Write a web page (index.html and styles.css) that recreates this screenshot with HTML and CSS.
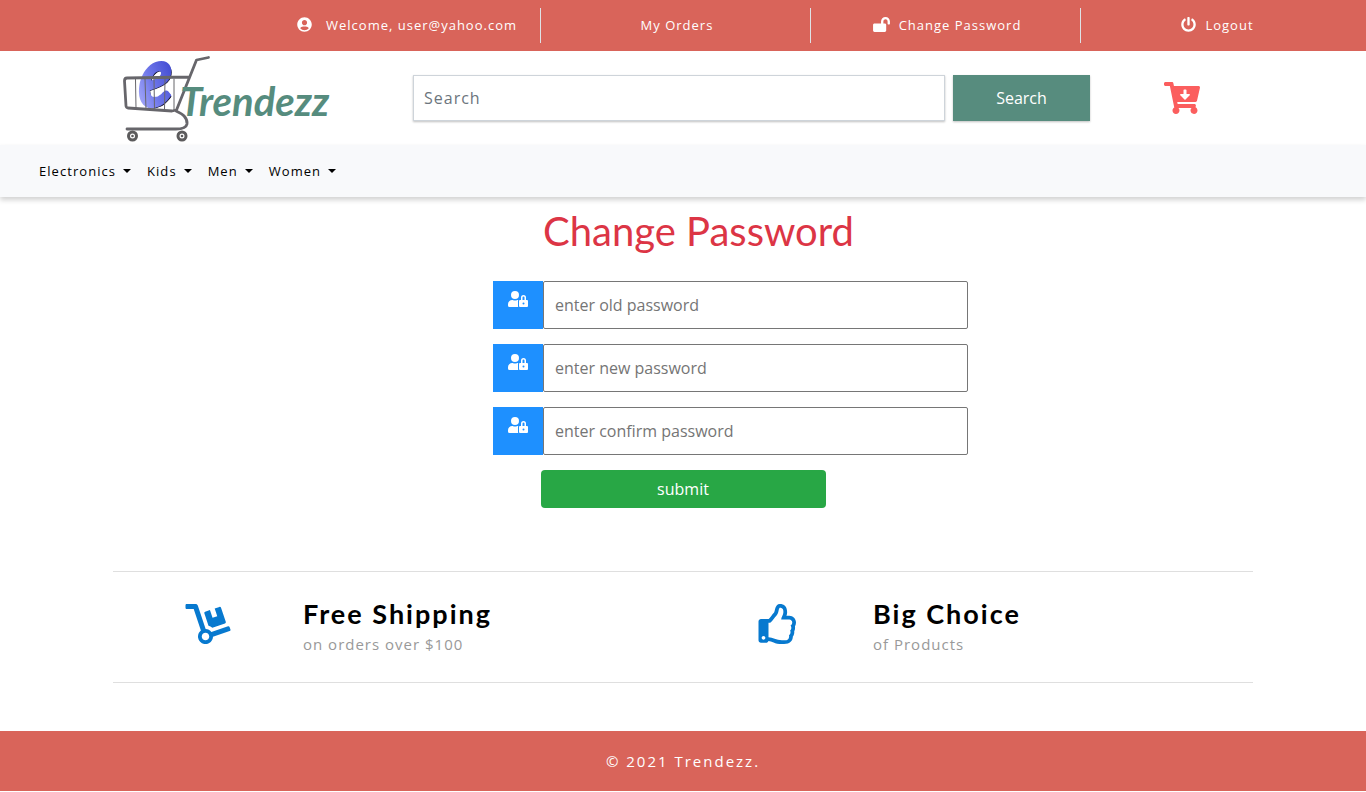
FILE: index.html
```html
<!DOCTYPE html>
<html lang="en">
<head>
<meta charset="utf-8">
<title>Trendezz</title>
<link rel="stylesheet" href="styles.css">
</head>
<body>
<svg class="defs" width="0" height="0">
  <symbol id="user-lock" viewBox="0 0 640 512"><path d="M224 256A128 128 0 1 0 96 128a128 128 0 0 0 128 128zm96 64a63.08 63.08 0 0 1 8.1-30.5c-4.8-.5-9.5-1.5-14.5-1.5h-16.7a174.08 174.08 0 0 1-145.8 0h-16.7A134.43 134.43 0 0 0 0 422.4V464a48 48 0 0 0 48 48h280.9a63.54 63.54 0 0 1-8.9-32zm288-32h-32v-80a80 80 0 0 0-160 0v80h-32a32 32 0 0 0-32 32v160a32 32 0 0 0 32 32h224a32 32 0 0 0 32-32V320a32 32 0 0 0-32-32zM496 432a32 32 0 1 1 32-32 32 32 0 0 1-32 32zm32-144h-64v-80a32 32 0 0 1 64 0z"/></symbol>
</svg>
<div class="topbar">
  <div class="top-item">
    <svg class="ico user" viewBox="0 0 496 512"><path d="M248 8C111 8 0 119 0 256s111 248 248 248 248-111 248-248S385 8 248 8zm0 96c48.6 0 88 39.4 88 88s-39.4 88-88 88-88-39.4-88-88 39.4-88 88-88zm0 344c-58.7 0-111.3-26.6-146.5-68.2 18.8-35.4 55.6-59.8 98.5-59.8 2.4 0 4.8.4 7.1 1.1 13 4.2 26.6 6.9 40.9 6.9 14.3 0 28-2.7 40.9-6.9 2.3-.7 4.7-1.1 7.1-1.1 42.9 0 79.7 24.4 98.5 59.8C359.3 421.4 306.7 448 248 448z"/></svg>
    <span>Welcome, user@yahoo.com</span>
  </div>
  <div class="top-item"><span>My Orders</span></div>
  <div class="top-item">
    <svg class="ico lock" viewBox="0 0 576 512"><path d="M423.5 0C339.5.3 272 69.5 272 153.5V224H48c-26.5 0-48 21.5-48 48v192c0 26.5 21.5 48 48 48h352c26.5 0 48-21.5 48-48V272c0-26.5-21.5-48-48-48h-48v-71.1c0-39.6 31.7-72.5 71.3-72.9 40-.4 72.7 32.1 72.7 72v80c0 13.3 10.7 24 24 24h32c13.3 0 24-10.7 24-24v-80C576 68 507.5-.3 423.5 0z"/></svg>
    <span>Change Password</span>
  </div>
  <div class="top-item">
    <svg class="ico power" viewBox="0 0 512 512"><path d="M400 54.1c63 45 104 118.6 104 201.9 0 136.8-110.8 247.7-247.5 248C120 504.3 8.2 393 8 256.4 7.9 173.1 48.9 99.3 111.8 54.2c11.7-8.3 28-4.8 35 7.7L162.6 90c5.9 10.5 3.1 23.8-6.6 31-41.5 30.8-68 79.6-68 134.9-.1 92.3 74.5 168.1 168 168.1 91.6 0 168.6-74.2 168-169.1-.3-51.8-24.7-101.8-68.1-134-9.7-7.2-12.4-20.5-6.5-30.9l15.8-28.1c7-12.4 23.2-16.1 34.8-7.8zM296 264V24c0-13.3-10.7-24-24-24h-32c-13.3 0-24 10.7-24 24v240c0 13.3 10.7 24 24 24h32c13.3 0 24-10.7 24-24z"/></svg>
    <span>Logout</span>
  </div>
</div>

<header class="header">
  <a class="logo">
    <svg class="logo-cart" width="90" height="90" viewBox="0 0 90 90">
      <defs>
        <linearGradient id="blue" x1="0" y1="1" x2="1" y2="0">
          <stop offset="0" stop-color="#b9bcff"/><stop offset=".4" stop-color="#7078ea"/><stop offset="1" stop-color="#2530c4"/>
        </linearGradient>
      </defs>
      <g class="letter" transform="translate(17 54.500) rotate(-10) skewX(-9) scale(.88 1)">
        <text x="1.500" y="1.500" fill="#10102c" stroke="#10102c">e</text>
        <text x="0" y="0" fill="url(#blue)" stroke="url(#blue)" stroke-width="3">e</text>
      </g>
      <g fill="none" stroke="#67666b" stroke-linejoin="round" stroke-linecap="round">
        <path stroke-width="2.800" d="M86.500 3.500 74.500 6 54.500 56 50 57 6 54Q4.500 54 4 52L2.500 27Q2.500 24 5 24L67 23M54 57Q66 62 65 70Q64 75 54 75L5 75"/>
        <path stroke-width="1" d="M13.500 25 14 54M23 25 24 55M32 25 32.500 55M43 25 42.500 56M52 25 52 56"/>
      </g>
      <g fill="#fff" stroke="#5c5b5c" stroke-width="3">
        <circle cx="10.500" cy="82" r="4"/><circle cx="60" cy="82" r="4"/>
      </g>
      <g fill="#5c5b5c"><circle cx="10.500" cy="82" r="1.300"/><circle cx="60" cy="82" r="1.300"/></g>
    </svg>
    <span class="logo-name">Trendezz</span>
  </a>
  <form class="search">
    <input type="text" placeholder="Search">
    <button type="button">Search</button>
  </form>
  <svg class="cart" viewBox="0 0 576 512"><path d="M504.717 320H211.572l6.545 32h268.418c15.401 0 26.816 14.301 23.403 29.319l-5.517 24.276C523.112 414.668 536 433.828 536 456c0 31.202-25.519 56.444-56.824 55.994-29.823-.429-54.35-24.631-55.155-54.447-.44-16.287 6.085-31.049 16.803-41.548H231.176C241.553 426.165 248 440.326 248 456c0 31.813-26.528 57.431-58.67 55.938-28.54-1.325-51.751-24.385-53.251-52.917-1.158-22.034 10.436-41.455 28.051-51.586L93.883 64H24C10.745 64 0 53.255 0 40V24C0 10.745 10.745 0 24 0h102.529c11.401 0 21.228 8.021 23.513 19.19L159.208 64H551.99c15.401 0 26.816 14.301 23.403 29.319l-47.273 208C525.637 312.246 515.923 320 504.717 320zM403.029 192H360v-60c0-6.627-5.373-12-12-12h-24c-6.627 0-12 5.373-12 12v60h-43.029c-10.691 0-16.045 12.926-8.485 20.485l67.029 67.029c4.686 4.686 12.284 4.686 16.971 0l67.029-67.029c7.559-7.559 2.205-20.485-8.486-20.485z"/></svg>
</header>

<nav class="nav">
  <a>Electronics</a><a>Kids</a><a>Men</a><a>Women</a>
</nav>

<main class="main">
  <h1>Change Password</h1>
  <form class="form">
    <label class="field"><span class="badge"><svg><use href="#user-lock"/></svg></span><input type="text" placeholder="enter old password"></label>
    <label class="field"><span class="badge"><svg><use href="#user-lock"/></svg></span><input type="text" placeholder="enter new password"></label>
    <label class="field"><span class="badge"><svg><use href="#user-lock"/></svg></span><input type="text" placeholder="enter confirm password"></label>
    <button class="submit" type="button">submit</button>
  </form>
</main>

<section class="features">
  <div class="feature">
    <div class="feature-icon"><svg width="46" height="41" viewBox="0 0 576 512"><path d="M294.2 277.7c18 5 34.7 13.4 49.5 24.7l161.5-53.8c8.4-2.8 12.900-11.900 10.100-20.200L454.900 47.200c-2.800-8.400-11.900-12.900-20.200-10.100l-61.100 20.400 33.100 99.400L346 177l-33.100-99.400-61.600 20.500c-8.400 2.800-12.900 11.900-10.100 20.200l53 159.400zm281 48.700L565 296c-2.800-8.400-11.900-12.900-20.200-10.100l-213.500 71.200c-17.200-22-43.600-36.400-73.500-37L158.400 21.900C154 8.800 141.800 0 128 0H16C7.200 0 0 7.200 0 16v32c0 8.800 7.200 16 16 16h88.900l92.200 276.700c-26.100 20.400-41.700 53.600-36 90.500 6.100 39.400 37.900 72.300 77.300 79.200 60.200 10.700 112.300-34.800 113.400-92.600l213.300-71.200c8.300-2.800 12.900-11.800 10.100-20.200zM256 464c-26.500 0-48-21.500-48-48s21.500-48 48-48 48 21.500 48 48-21.500 48-48 48z"/></svg></div>
    <div><h3>Free Shipping</h3><p>on orders over $100</p></div>
  </div>
  <div class="feature">
    <div class="feature-icon"><svg width="41" height="41" viewBox="0 0 512 512"><path d="M466.270 286.690C475.040 271.840 480 256 480 236.850c0-44.015-37.218-85.580-85.820-85.580H357.700c4.920-12.810 8.850-28.130 8.850-46.540C366.550 31.936 328.860 0 271.280 0c-61.607 0-58.093 94.933-71.760 108.600-22.747 22.747-49.615 66.447-68.760 83.400H32c-17.673 0-32 14.327-32 32v240c0 17.673 14.327 32 32 32h64c14.893 0 27.408-10.174 30.978-23.950 44.509 1.001 75.060 39.940 177.802 39.940 7.220 0 15.220.010 22.220.010 77.117 0 111.986-39.423 112.940-95.330 13.319-18.425 20.299-43.122 17.340-66.990 9.854-18.452 13.664-40.343 8.990-62.990zm-61.750 53.830c12.560 21.130 1.260 49.410-13.940 57.570 7.700 48.780-17.608 65.900-53.120 65.900h-37.820c-71.639 0-118.029-37.820-171.640-37.820V240h10.920c28.360 0 67.980-70.890 94.540-97.460 28.360-28.360 18.910-75.630 37.820-94.540 47.270 0 47.270 32.980 47.270 56.730 0 39.170-28.360 56.720-28.360 94.540h103.990c21.110 0 37.730 18.910 37.820 37.820.090 18.900-12.820 37.810-22.270 37.810 13.489 14.555 16.371 45.236-5.210 65.620zM88 432c0 13.255-10.745 24-24 24s-24-10.745-24-24 10.745-24 24-24 24 10.745 24 24z"/></svg></div>
    <div><h3>Big Choice</h3><p>of Products</p></div>
  </div>
</section>

<footer class="footer">© 2021 Trendezz.</footer>
</body>
</html>
```
FILE: styles.css
```css
* { box-sizing: border-box; }
body { margin: 0; height: 792px; overflow: hidden; background: #fff; font: 16px/24px "Open Sans", sans-serif; color: #212529; }
h1, h3, p { margin: 0; }
input, button { font-family: inherit; font-size: 16px; outline: 0; }
svg { flex: none; }
.defs { display: none; }

.topbar { height: 51px; background: #d9645a; padding: 8px 15px 8px 271px; display: flex; }
.top-item { width: 270px; height: 35px; border-right: 1px solid #dee2e6; display: flex; justify-content: center; color: #fff; font-size: 13px; font-weight: 500; line-height: 35px; letter-spacing: 1px; padding-left: 3px; }
.top-item:last-child { border-right: 0; }
.ico { height: 15px; fill: #fff; margin-top: 9px; }
.user { width: 15px; margin-right: 14px; }
.lock { width: 17px; margin-right: 9px; }
.power { width: 15px; margin-right: 9px; }

.header { height: 94px; padding-left: 122px; display: flex; }
.logo { width: 291px; display: flex; padding-top: 3px; }
.logo-cart { overflow: visible; }
.letter { font: italic 700 80px Lato, sans-serif; }
.logo-name { margin-left: -32px; padding-top: 23px; font: italic 700 40px/48px Lato, sans-serif; color: #568c7e; }
.search { display: flex; gap: 8px; padding-top: 24px; }
.search input { width: 532px; height: 46px; padding: 0 10px; border: 1px solid #ced4da; letter-spacing: 1px; box-shadow: 0 1px 2px rgba(0,0,0,.25); }
.search input::placeholder { color: #6c757d; }
.search button { width: 137px; height: 46px; border: 0; padding: 0; background: #578c7e; color: #fff; box-shadow: 0 1px 2px rgba(0,0,0,.25); }
.cart { width: 36px; height: 32px; margin: 31px 0 0 74px; fill: #fb5e5e; }

.nav { height: 52px; padding: 0 39px; display: flex; align-items: center; gap: 16px; background: #f8f9fb; box-shadow: 0 3px 5px rgba(0,0,0,.18); color: #000; font-size: 13px; letter-spacing: 1.05px; }
.nav a { display: flex; align-items: center; }
.nav a::after { content: ""; margin-left: 7px; border: 4px solid transparent; border-top-color: #000; border-bottom: 0; }

.main { height: 374px; padding: 10px 0 0 493px; }
.main h1 { padding-left: 50px; font: 400 40px/48px Lato, sans-serif; color: #dc3545; }
.form { padding-top: 26px; display: flex; flex-direction: column; gap: 15px; }
.field { width: 475px; height: 48px; display: flex; }
.badge { width: 50px; background: #1e90ff; padding: 10px 15px; }
.badge svg { display: block; width: 20px; height: 16px; fill: #fff; }
.field input { flex: 1; border: 1px solid #767676; border-radius: 2px; padding: 0 11px; }
.field input::placeholder { color: #757575; }
.submit { width: 285px; height: 38px; margin-left: 48px; padding: 0 1px 0 0; border: 0; border-radius: 4px; background: #28a745; color: #fff; }

.features { height: 112px; margin: 0 113px; border: solid #dfdfdf; border-width: 1px 0; display: flex; }
.feature { width: 570px; display: flex; padding-top: 25px; }
.feature-icon { width: 190px; display: flex; justify-content: center; padding-top: 7px; }
.feature-icon svg { height: 40px; fill: #0779cf; }
.feature h3 { font: 700 27px/34px Lato, sans-serif; letter-spacing: 2px; color: #000; }
.feature p { font-size: 15px; line-height: 26px; letter-spacing: 1px; color: #999; }

.footer { height: 60px; margin-top: 48px; background: #d9645a; color: #fff; text-align: center; line-height: 61px; font-size: 15px; font-weight: 500; letter-spacing: 2px; }
```
